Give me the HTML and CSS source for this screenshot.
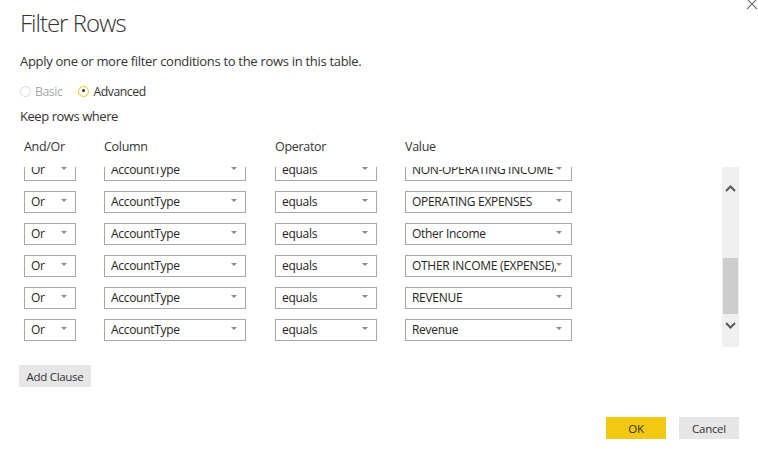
FILE: index.html
```html
<!DOCTYPE html>
<html>
<head>
<meta charset="utf-8">
<link rel="stylesheet" href="styles.css">
</head>
<body>
<div class="dialog">
  <button class="close" aria-label="Close">
    <svg width="12" height="12" viewBox="0 0 12 12"><path d="M1 -1 L11 9 M11 -1 L1 9" stroke="#707070" stroke-width="1.1" fill="none"/></svg>
  </button>
  <h1 class="title">Filter Rows</h1>
  <p class="desc">Apply one or more filter conditions to the rows in this table.</p>
  <div class="modes">
    <label class="radio disabled"><span class="dot"></span>Basic</label>
    <label class="radio checked"><span class="dot"></span>Advanced</label>
  </div>
  <div class="keep">Keep rows where</div>
  <div class="grid header">
    <div>And/Or</div><div>Column</div><div>Operator</div><div>Value</div>
  </div>
  <div class="rows-area">
    <div class="viewport">
      <div class="rows">
        <div class="grid row">
          <div class="sel w-andor"><span class="txt">Or</span><span class="arr"></span></div>
          <div class="sel w-col"><span class="txt">AccountType</span><span class="arr"></span></div>
          <div class="sel w-op"><span class="txt">equals</span><span class="arr"></span></div>
          <div class="sel w-val"><span class="txt">NON-OPERATING INCOME</span><span class="arr"></span></div>
        </div>
        <div class="grid row">
          <div class="sel w-andor"><span class="txt">Or</span><span class="arr"></span></div>
          <div class="sel w-col"><span class="txt">AccountType</span><span class="arr"></span></div>
          <div class="sel w-op"><span class="txt">equals</span><span class="arr"></span></div>
          <div class="sel w-val"><span class="txt">OPERATING EXPENSES</span><span class="arr"></span></div>
        </div>
        <div class="grid row">
          <div class="sel w-andor"><span class="txt">Or</span><span class="arr"></span></div>
          <div class="sel w-col"><span class="txt">AccountType</span><span class="arr"></span></div>
          <div class="sel w-op"><span class="txt">equals</span><span class="arr"></span></div>
          <div class="sel w-val"><span class="txt">Other Income</span><span class="arr"></span></div>
        </div>
        <div class="grid row">
          <div class="sel w-andor"><span class="txt">Or</span><span class="arr"></span></div>
          <div class="sel w-col"><span class="txt">AccountType</span><span class="arr"></span></div>
          <div class="sel w-op"><span class="txt">equals</span><span class="arr"></span></div>
          <div class="sel w-val"><span class="txt">OTHER INCOME (EXPENSE), NET</span><span class="arr"></span></div>
        </div>
        <div class="grid row">
          <div class="sel w-andor"><span class="txt">Or</span><span class="arr"></span></div>
          <div class="sel w-col"><span class="txt">AccountType</span><span class="arr"></span></div>
          <div class="sel w-op"><span class="txt">equals</span><span class="arr"></span></div>
          <div class="sel w-val"><span class="txt">REVENUE</span><span class="arr"></span></div>
        </div>
        <div class="grid row">
          <div class="sel w-andor"><span class="txt">Or</span><span class="arr"></span></div>
          <div class="sel w-col"><span class="txt">AccountType</span><span class="arr"></span></div>
          <div class="sel w-op"><span class="txt">equals</span><span class="arr"></span></div>
          <div class="sel w-val"><span class="txt">Revenue</span><span class="arr"></span></div>
        </div>
      </div>
    </div>
    <div class="scrollbar">
      <div class="sb-btn">
        <svg width="11" height="7" viewBox="0 0 11 7"><path d="M1 6 L5.5 1.5 L10 6" stroke="#5a5a5a" stroke-width="2" fill="none"/></svg>
      </div>
      <div class="sb-track"><div class="sb-thumb"></div></div>
      <div class="sb-btn">
        <svg width="11" height="7" viewBox="0 0 11 7"><path d="M1 1 L5.5 5.5 L10 1" stroke="#5a5a5a" stroke-width="2" fill="none"/></svg>
      </div>
    </div>
  </div>
  <button class="btn add">Add Clause</button>
  <div class="footer">
    <button class="btn ok">OK</button>
    <button class="btn cancel">Cancel</button>
  </div>
</div>
</body>
</html>
```
FILE: styles.css
```css
* { box-sizing: border-box; }
html, body { margin: 0; padding: 0; background: #fff; }
body {
  font-family: "Open Sans", "Noto Sans", sans-serif;
  color: #333;
  width: 758px;
  height: 459px;
  overflow: hidden;
}
.dialog {
  position: relative;
  padding: 0 19px 0 20px;
}
.close {
  position: absolute;
  top: 0;
  right: 0;
  width: 12px;
  height: 12px;
  padding: 0;
  border: 0;
  background: none;
  line-height: 0;
}
.title {
  margin: 0;
  padding-top: 6px;
  font-size: 24px;
  font-weight: 300;
  line-height: 34px;
  color: #333;
  letter-spacing: -1px;
}
.desc {
  margin: 11px 0 0 0;
  font-size: 13px;
  line-height: 20px;
  color: #333;
  letter-spacing: -0.3px;
}
.modes {
  display: flex;
  gap: 16px;
  margin-top: 10px;
  height: 20px;
  align-items: center;
}
.radio {
  display: flex;
  align-items: center;
  gap: 4px;
  font-size: 12.2px;
  color: #333;
  letter-spacing: -0.4px;
}
.radio.disabled { color: #a8a8a8; }
.dot {
  width: 11px;
  height: 11px;
  border-radius: 50%;
  border: 1px solid #d8d8d8;
  display: inline-block;
  position: relative;
}
.radio.checked .dot { border: 1.5px solid #f2c811; }
.radio.checked .dot::after {
  content: "";
  position: absolute;
  left: 2.5px;
  top: 2.5px;
  width: 3px;
  height: 3px;
  border-radius: 50%;
  background: #333;
}
.keep {
  margin-top: 5px;
  font-size: 13px;
  line-height: 20px;
  letter-spacing: -0.45px;
}
.grid {
  display: grid;
  grid-template-columns: 80px 171px 130px 167px;
}
.header {
  margin: 12px 0 10px 4px;
  font-size: 12.5px;
  line-height: 18px;
  height: 19px;
  letter-spacing: -0.3px;
}
.rows-area {
  display: flex;
  margin-left: 4px;
  height: 180px;
}
.viewport {
  flex: 1;
  height: 180px;
  overflow: hidden;
}
.rows {
  margin-top: -8px;
  display: flex;
  flex-direction: column;
  gap: 10px;
}
.sel {
  height: 22px;
  border: 1px solid #a8a8a8;
  display: flex;
  align-items: center;
  padding: 0 8px 0 6px;
  font-size: 12px;
  color: #252423;
  letter-spacing: -0.3px;
  background: #fff;
}
.sel .txt {
  flex: 1;
  white-space: nowrap;
  overflow: hidden;
  line-height: 20px;
}
.sel .arr {
  width: 0;
  height: 0;
  border-left: 3px solid transparent;
  border-right: 3px solid transparent;
  border-top: 3px solid #8a8a8a;
  margin-top: -3px;
  flex: none;
}
.w-andor { width: 52px; }
.w-col { width: 142px; }
.w-op { width: 102px; }
.w-val { width: 167px; padding-right: 9px; }
.scrollbar {
  width: 17px;
  background: #f0f0f0;
  display: flex;
  flex-direction: column;
}
.sb-btn {
  height: 17px;
  display: flex;
  align-items: center;
  justify-content: center;
}
.sb-btn:first-child { margin-top: 13px; }
.sb-track {
  flex: 1;
  padding: 0 1px;
  display: flex;
  flex-direction: column;
  justify-content: flex-end;
  padding-bottom: 3px;
}
.sb-thumb {
  height: 56px;
  background: #cdcdcd;
}
.sb-btn:last-child { margin-bottom: 13px; }
.btn {
  font-family: "Open Sans", "Noto Sans", sans-serif;
  border: 0;
  height: 22px;
  font-size: 11.5px;
  letter-spacing: -0.3px;
  color: #333;
  padding: 0;
}
.add {
  display: block;
  margin: 18px 0 0 -1px;
  width: 72px;
  background: #e6e6e6;
}
.footer {
  display: flex;
  justify-content: flex-end;
  gap: 13px;
  margin-top: 30px;
}
.ok { width: 60px; background: #f2c811; }
.cancel { width: 60px; background: #e6e6e6; }
```
